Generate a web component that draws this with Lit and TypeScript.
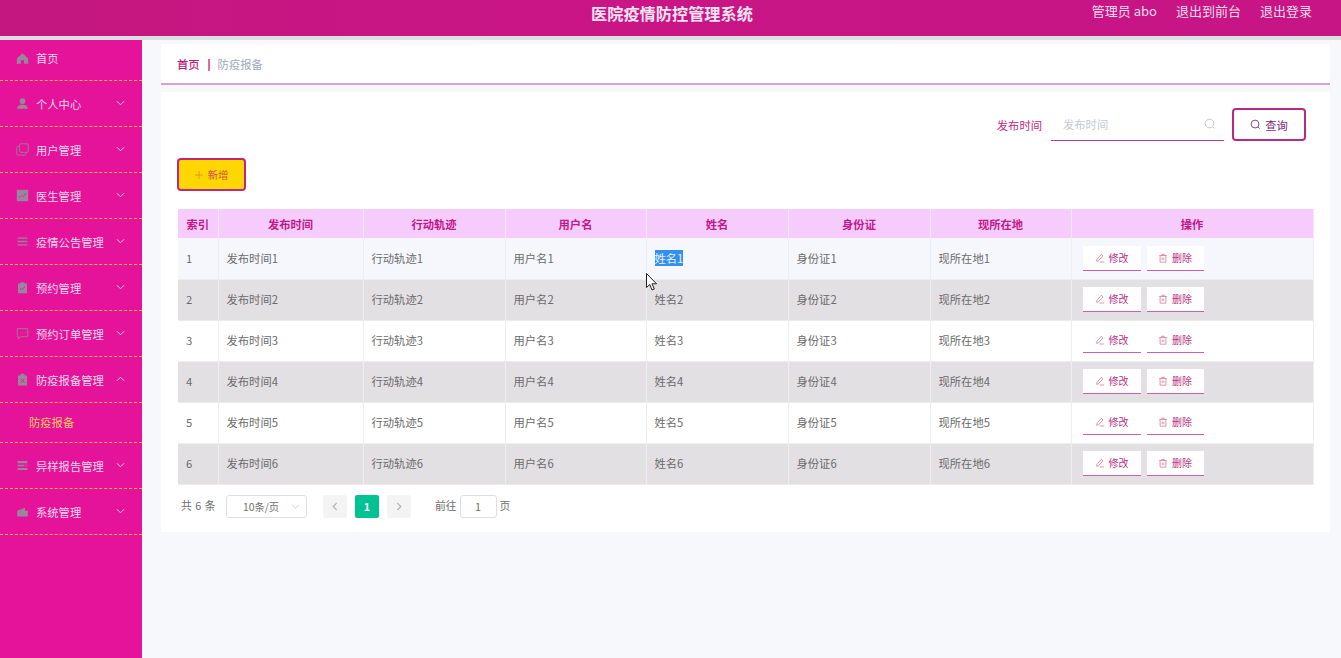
import { LitElement, html, css, svg } from "lit";
import { customElement } from "lit/decorators.js";

const ic: Record<string, unknown> = {
  home: svg`<path d="M8 1.500 1 8v6.500h5V10h4v4.500h5V8z" fill="currentColor"/>`,
  user: svg`<circle cx="8" cy="5" r="3.600" fill="currentColor"/><path d="M1.500 14.500c0-3.600 2.600-5 6.500-5s6.500 1.400 6.500 5z" fill="currentColor"/>`,
  copy: svg`<rect x="4.500" y="1" width="10.500" height="10.500" rx="1.500" fill="none" stroke="currentColor"/><path d="M4 4H2.500A1.500 1.500 0 0 0 1 5.500v8A1.500 1.500 0 0 0 2.500 15h8a1.500 1.500 0 0 0 1.500-1.500V12" fill="none" stroke="currentColor"/>`,
  chart: svg`<rect x="1" y="1" width="14" height="14" fill="currentColor"/><path d="M3.500 11 7 8l2 1.500L12.500 5" fill="none" stroke="#e5139a" stroke-width=".8"/>`,
  lines: svg`<path d="M2 3h12v1.600H2zM2 7.200h12v1.600H2zM2 11.400h12V13H2z" fill="currentColor"/>`,
  check: svg`<path d="M2.500 3h3V1.500h5V3h3v12h-11z" fill="currentColor"/><path d="m5 8.500 2.200 2.200L11 7" fill="none" stroke="#e5139a"/>`,
  chat: svg`<path d="M1.500 2h13v10H6l-3 2.500V12H1.500z" fill="none" stroke="currentColor"/><path d="M5 7h1M8 7h1M11 7h1" stroke="currentColor"/>`,
  clipx: svg`<path d="M2.500 3h3V1h5v2h3v12.500h-11z" fill="currentColor"/><path d="m5.500 7 5 5m0-5-5 5" stroke="#e5139a"/>`,
  list: svg`<path d="M2 2.500h12v2.600H2zM2 7h12v2H2zM2 11h12v2.500H2z" fill="currentColor"/><path d="M10 8h3" stroke="#e5139a"/>`,
  wallet: svg`<path d="M1.500 7 11 3.500V7h3.500v7h-13z" fill="currentColor"/>`,
};

const icon = (n: string) => html`<svg class="mi" viewBox="0 0 16 16">${ic[n]}</svg>`;
const chevron = (up: boolean) => html`<svg class="chev" viewBox="0 0 10 6"><path d="${up ? "M1 5 5 1l4 4" : "M1 1l4 4 4-4"}" fill="none" stroke="currentColor"/></svg>`;
const search = html`<svg class="si" viewBox="0 0 12 12"><circle cx="5.500" cy="5.500" r="4.300" fill="none" stroke="currentColor"/><path d="m8.700 8.700 1.800 1.800" stroke="currentColor"/></svg>`;

const menu: [string, string][] = [
  ["user", "个人中心"], ["copy", "用户管理"], ["chart", "医生管理"], ["lines", "疫情公告管理"],
  ["check", "预约管理"], ["chat", "预约订单管理"],
];

@customElement("app-root")
export class AppRoot extends LitElement {
  static styles = css`
    :host { display: block; width: 1341px; height: 658px; overflow: hidden; position: relative; background: #f6f8fc;
      font-family: "Noto Sans CJK SC", "Noto Sans", sans-serif; font-size: 11.300px; color: #606266; }
    .top { box-sizing: border-box; height: 40px; border-bottom: 4px solid #dbdfdf; background: linear-gradient(90deg, #c4177f, #c91585 40%, #c71585);
      display: flex; justify-content: flex-end; position: relative; color: #f3dcea; font-size: 13px; gap: 19px; padding: 1px 29px 0 0; line-height: 20px; }
    .title { position: absolute; left: 3px; right: 0; top: 3px; text-align: center; font-size: 16.200px; font-weight: 700; color: #f6e3ef; }
    .body { display: flex; height: 618px; }
    .side { width: 142px; flex: none; background: #e5139a; color: #f4d9ea; }
    .mitem { box-sizing: border-box; height: 46px; border-bottom: 1px dashed #f0b03c; display: flex; align-items: center; padding: 0 16px; gap: 7px; position: relative; }
    .mitem.first { height: 41px; padding-bottom: 4px; }
    .mi { width: 13px; height: 13px; color: #98879c; flex: none; }
    .chev { position: absolute; left: 116px; top: 19px; width: 9px; height: 6px; color: #f4d9ea; }
    .sub { box-sizing: border-box; height: 40px; padding: 4px 0 0 29px; border-bottom: 1px dashed #f0b03c; color: #f7c85c; line-height: 30px; }
    .main { flex: 1; padding: 4px 11px 0 19px; min-width: 0; }
    .crumb { box-sizing: border-box; height: 41px; background: #fff; border-bottom: 2px solid #d8a2d2; display: flex; align-items: center; padding: 0 16px; color: #a0a9bb; }
    .crumb b { color: #b91d77; font-weight: 500; }
    .crumb i { width: 2px; height: 12px; background: #e0689c; margin: 2px 8px 0 8px; }
    .card { box-sizing: border-box; height: 440px; margin-top: 7px; background: #fff; padding: 16px 16px 0 16px; }
    .search { display: flex; justify-content: flex-end; align-items: center; height: 33px; padding-right: 8px; color: #c02a86; }
    .field { box-sizing: border-box; width: 173px; height: 33px; margin: 0 8px 0 9px; border-bottom: 1px solid #b93c90; display: flex; align-items: center; justify-content: space-between; padding: 0 8px 0 12px; color: #c6c9d0; }
    .field .si { width: 12px; height: 12px; color: #c6c9d0; }
    .qbtn { box-sizing: border-box; width: 74px; height: 33px; border: 2px solid #b62a86; border-radius: 4px; display: flex; align-items: center; justify-content: center; gap: 4px; color: #7d2a7e; background: #fff; }
    .qbtn .si { width: 11px; height: 11px; color: #6e3d80; }
    .add { box-sizing: border-box; width: 69px; height: 33px; margin-top: 17px; background: #ffd700; border: 2px solid #c0267f; border-radius: 4px; display: flex; align-items: center; justify-content: center; gap: 5px; color: #d2504a; font-size: 10.300px; }
    .add span { margin-bottom: 1px; }
    .add svg { width: 8px; height: 8px; color: #dd8a30; }
    table { border-collapse: collapse; table-layout: fixed; width: 1135px; margin: 18px 0 0 1px; }
    th { height: 29px; padding: 0; background: #f5ccfb; color: #c2188a; font-weight: 600; border-right: 1px solid #f4e6f9; }
    td { height: 41px; box-sizing: border-box; padding: 0 0 1px 8px; border-right: 1px solid #ebeef5; border-bottom: 1px solid #ebeef5; background: #fff; color: #6b6b6b; }
    tr.hi td { background: #f6f7fd; padding-bottom: 0; }
    tr.even td { background: #e3e0e3; border-right-color: #eeedf0; border-bottom-color: #ecebee; }
    .sel { background: #3390f0; color: #e8f3ff; }
    .ops { display: flex; gap: 6px; padding-left: 3px; }
    .op { box-sizing: border-box; width: 58px; height: 25px; background: #fff; border-bottom: 1px solid #c95fae; display: flex; align-items: center; justify-content: center; gap: 4px; color: #b9327f; font-size: 10px; }
    .op + .op { width: 57px; }
    .op svg { width: 10px; height: 10px; color: #d77f9f; }
    .pager { display: flex; align-items: center; height: 23px; margin: 10px 0 0 4px; color: #6f6f6f; font-size: 10.800px; }
    .pager > span { margin-bottom: 2px; }
    .total { width: 34px; white-space: pre; word-spacing: 1px; }
    .sz { box-sizing: border-box; width: 81px; height: 23px; border: 1px solid #dcdfe6; border-radius: 3px; margin: 0 16px 0 11px; display: flex; align-items: center; justify-content: space-between; padding: 0 6px 0 16px; font-size: 10.300px; }
    .sz svg { width: 9px; height: 5px; color: #c0c4cc; }
    .pb { box-sizing: border-box; width: 24px; height: 23px; border-radius: 2px; background: #f4f4f5; display: flex; align-items: center; justify-content: center; color: #b0b4bc; margin-right: 8px; }
    .pb svg { width: 6px; height: 9px; }
    .pb.on { background: #00c292; color: #fff; font-weight: 700; }
    .go { box-sizing: border-box; width: 37px; height: 23px; border: 1px solid #dcdfe6; border-radius: 3px; margin: 0 3px; display: flex; align-items: center; justify-content: center; }
    .cursor { position: absolute; left: 646px; top: 273px; width: 12px; height: 18px; }
    .pl { margin-left: 16px; }
  `;

  render() {
    const rows = [1, 2, 3, 4, 5, 6];
    const editIc = html`<svg viewBox="0 0 12 12"><path d="M7.500 1.500 9.500 3.500 4 9.500 2 10l.3-2.200zM5.500 10.800H11" fill="none" stroke="currentColor"/></svg>`;
    const delIc = html`<svg viewBox="0 0 12 12"><path d="M2.500 3v8h7V3M1.500 3h9M4.500 3V1.500h3V3M5 5.500v3M7 5.500v3" fill="none" stroke="currentColor"/></svg>`;
    return html`
      <div class="top">
        <div class="title">医院疫情防控管理系统</div>
        <span>管理员 abo</span><span>退出到前台</span><span>退出登录</span>
      </div>
      <div class="body">
        <nav class="side">
          <div class="mitem first">${icon("home")}<span>首页</span></div>
          ${menu.map(([i, t]) => html`<div class="mitem">${icon(i)}<span>${t}</span>${chevron(false)}</div>`)}
          <div class="mitem">${icon("clipx")}<span>防疫报备管理</span>${chevron(true)}</div>
          <div class="sub">防疫报备</div>
          <div class="mitem">${icon("list")}<span>异样报告管理</span>${chevron(false)}</div>
          <div class="mitem">${icon("wallet")}<span>系统管理</span>${chevron(false)}</div>
        </nav>
        <main class="main">
          <div class="crumb"><b>首页</b><i></i><span>防疫报备</span></div>
          <section class="card">
            <div class="search">
              <span>发布时间</span>
              <div class="field"><span>发布时间</span>${search}</div>
              <div class="qbtn">${search}<span>查询</span></div>
            </div>
            <div class="add"><svg viewBox="0 0 10 10"><path d="M5 0v10M0 5h10" stroke="currentColor"/></svg><span>新增</span></div>
            <table>
              <colgroup>
                <col style="width:40px" /><col style="width:145px" /><col style="width:142px" /><col style="width:141px" />
                <col style="width:142px" /><col style="width:142px" /><col style="width:141px" /><col style="width:242px" />
              </colgroup>
              <thead><tr>${["索引", "发布时间", "行动轨迹", "用户名", "姓名", "身份证", "现所在地", "操作"].map((h) => html`<th>${h}</th>`)}</tr></thead>
              <tbody>
                ${rows.map((n) => html`<tr class="${n === 1 ? "hi" : n % 2 === 0 ? "even" : ""}">
                  <td>${n}</td><td>发布时间${n}</td><td>行动轨迹${n}</td><td>用户名${n}</td>
                  <td>${n === 1 ? html`<span class="sel">姓名1</span>` : `姓名${n}`}</td>
                  <td>身份证${n}</td><td>现所在地${n}</td>
                  <td><div class="ops"><div class="op">${editIc}<span>修改</span></div><div class="op">${delIc}<span>删除</span></div></div></td>
                </tr>`)}
              </tbody>
            </table>
            <div class="pager">
              <span class="total">共 6 条</span>
              <div class="sz"><span>10条/页</span><svg viewBox="0 0 10 6"><path d="M1 1l4 4 4-4" fill="none" stroke="currentColor"/></svg></div>
              <div class="pb"><svg viewBox="0 0 6 10"><path d="M5 1 1 5l4 4" fill="none" stroke="currentColor" stroke-width="1.400"/></svg></div>
              <div class="pb on">1</div>
              <div class="pb"><svg viewBox="0 0 6 10"><path d="m1 1 4 4-4 4" fill="none" stroke="currentColor" stroke-width="1.400"/></svg></div>
              <span class="pl">前往</span><div class="go">1</div><span>页</span>
            </div>
          </section>
        </main>
      </div>
      <svg class="cursor" viewBox="0 0 12 18"><path d="M.5.5v14l3.300-3 2.200 5.500 2.300-1-2.300-5.200h4.500z" fill="#fff" stroke="#222"/></svg>
    `;
  }
}
